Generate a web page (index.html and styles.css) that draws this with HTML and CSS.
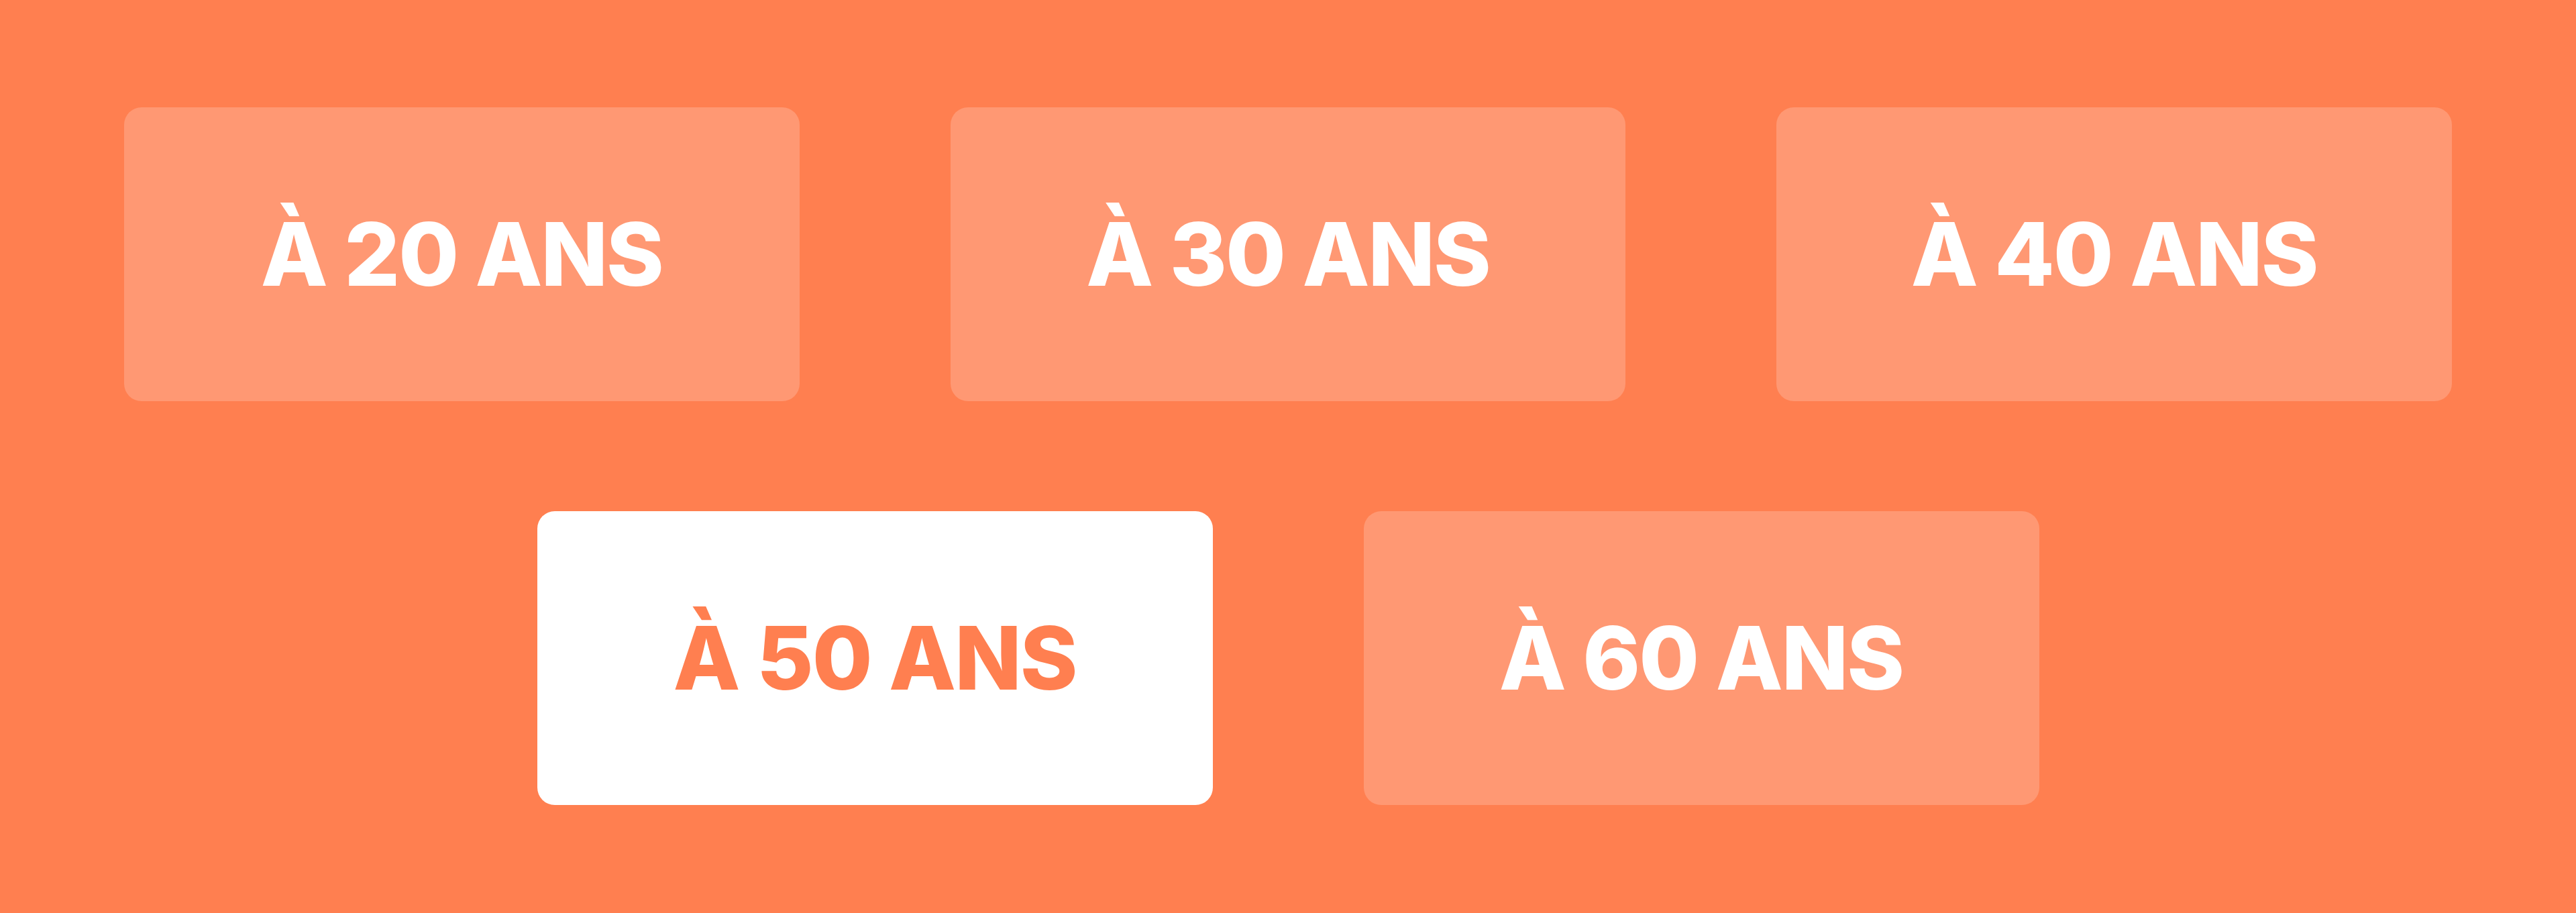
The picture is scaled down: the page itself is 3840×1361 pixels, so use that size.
FILE: index.html
```html
<!DOCTYPE html>
<html lang="fr">
<head>
<meta charset="utf-8">
<title>Âges</title>
<link rel="stylesheet" href="styles.css">
</head>
<body>
<main class="grid">
  <div class="row">
    <div class="card">À 20 ANS</div>
    <div class="card">À 30 ANS</div>
    <div class="card">À 40 ANS</div>
  </div>
  <div class="row">
    <div class="card card--active">À 50 ANS</div>
    <div class="card">À 60 ANS</div>
  </div>
</main>
</body>
</html>
```

FILE: styles.css
```css
html, body {
  margin: 0;
  padding: 0;
  background: #ff7f50;
  width: 3840px;
  height: 1361px;
  overflow: hidden;
}
.grid {
  box-sizing: border-box;
  height: 1361px;
  padding: 160px 185px;
  display: flex;
  flex-direction: column;
  gap: 164px;
}
.row {
  display: flex;
  justify-content: center;
  gap: 225px;
}
.card {
  width: 1007px;
  height: 438px;
  border-radius: 26px;
  background: rgba(255, 255, 255, 0.2);
  color: #ffffff;
  display: flex;
  align-items: center;
  justify-content: center;
  font-family: Inter, "Liberation Sans", sans-serif;
  font-weight: 800;
  font-size: 130px;
  letter-spacing: -2px;
  line-height: 1;
}
.card--active {
  background: #ffffff;
  color: #ff7f50;
}
```
